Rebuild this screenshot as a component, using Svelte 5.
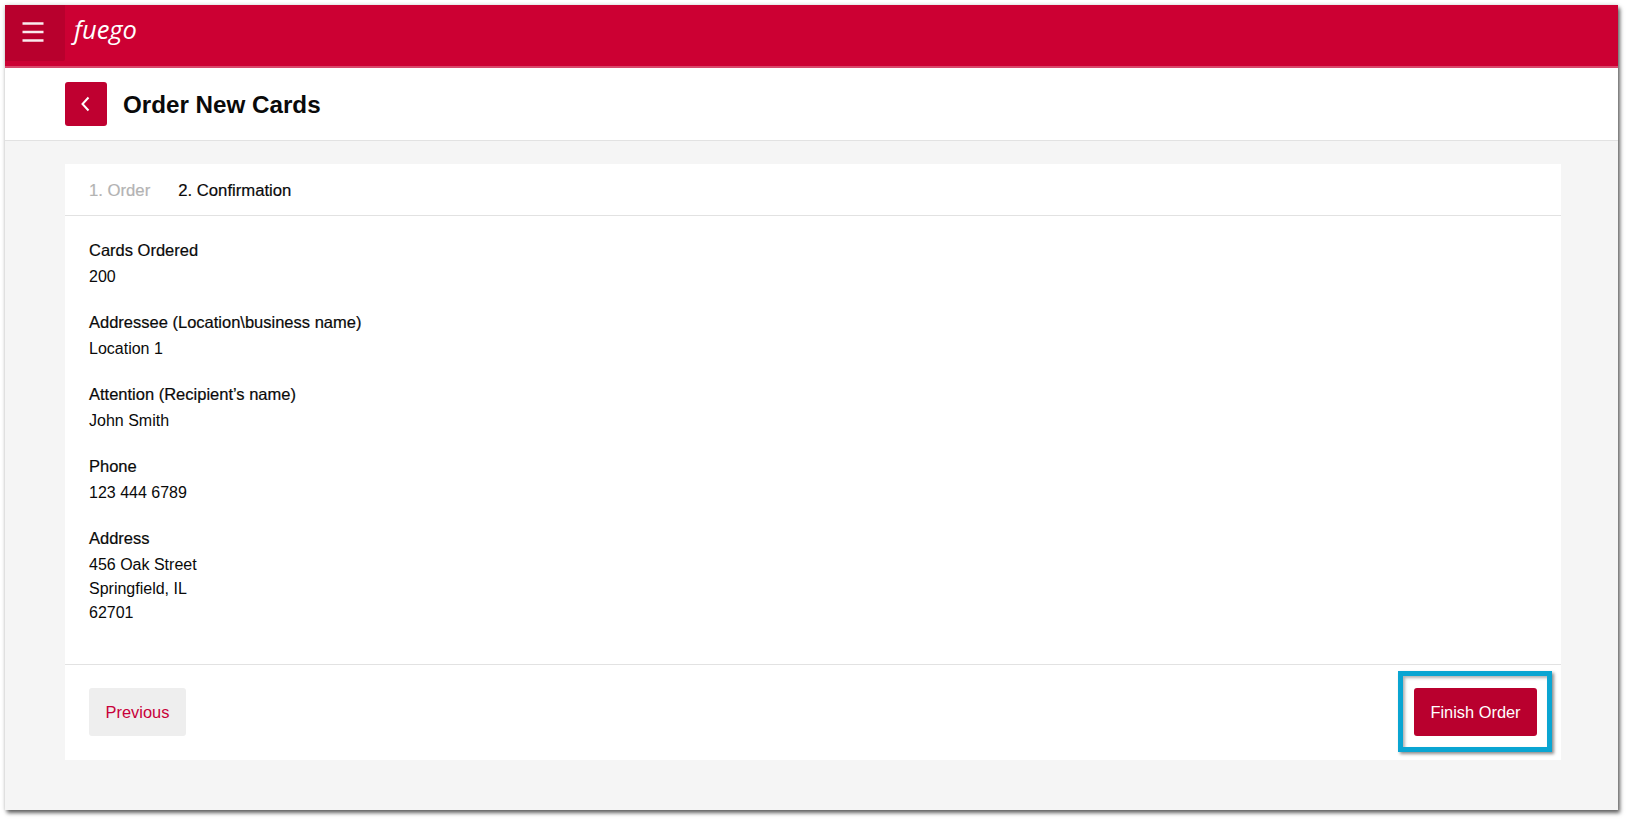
<script>
  const fields = [
    { label: 'Cards Ordered', lines: ['200'] },
    { label: 'Addressee (Location\\business name)', lines: ['Location 1'] },
    { label: 'Attention (Recipient’s name)', lines: ['John Smith'] },
    { label: 'Phone', lines: ['123 444 6789'] },
    { label: 'Address', lines: ['456 Oak Street', 'Springfield, IL', '62701'] }
  ];
</script>

<div class="page">
  <div class="window">
    <header class="topbar">
      <button class="menu" aria-label="Menu">
        <svg width="22" height="20" viewBox="0 0 22 20">
          <path d="M0.500 1.500H21.500M0.500 10H21.500M0.500 18.500H21.500" stroke="#fff" stroke-width="2.300" fill="none" opacity="0.92" />
        </svg>
      </button>
      <span class="logo">fuego</span>
    </header>

    <div class="subhead">
      <button class="back" aria-label="Back">
        <svg width="10" height="16" viewBox="0 0 10 16">
          <path d="M7.500 1.500L1.500 8L7.500 14.500" stroke="#fff" stroke-width="2" fill="none" />
        </svg>
      </button>
      <h1>Order New Cards</h1>
    </div>

    <main class="main">
      <section class="card">
        <nav class="tabs">
          <span class="tab muted">1. Order</span>
          <span class="tab">2. Confirmation</span>
        </nav>

        <div class="content">
          {#each fields as f}
            <div class="field">
              <div class="label">{f.label}</div>
              {#each f.lines as line}
                <div class="value">{line}</div>
              {/each}
            </div>
          {/each}
        </div>

        <footer class="footer">
          <button class="btn secondary">Previous</button>
          <div class="finish-wrap">
            <button class="btn primary">Finish Order</button>
            <div class="highlight"></div>
          </div>
        </footer>
      </section>
    </main>
  </div>
</div>

<style>
  :global(body) {
    margin: 0;
    background: #fff;
    font-family: "Liberation Sans", Arial, sans-serif;
  }
  .page {
    box-sizing: border-box;
    height: 819px;
    padding: 5px 0 0 5px;
    overflow: hidden;
  }
  .window {
    box-sizing: border-box;
    width: 1613px;
    height: 805px;
    display: flex;
    flex-direction: column;
    background: #f5f5f5;
    box-shadow: 2px 3px 4px rgba(0, 0, 0, 0.6), 0 0 4px rgba(0, 0, 0, 0.15);
  }
  .topbar {
    box-sizing: border-box;
    height: 63px;
    flex: none;
    display: flex;
    align-items: flex-start;
    background: #cc0033;
    border-bottom: 2px solid #d9486c;
  }
  .menu {
    box-sizing: border-box;
    width: 60px;
    height: 56px;
    flex: none;
    border: 0;
    padding: 0 4px 3px 0;
    background: #b8002d;
    border-radius: 0 0 2px 0;
    display: flex;
    align-items: center;
    justify-content: center;
  }
  .logo {
    margin: 9px 0 0 9px;
    color: #fff;
    font-family: "Open Sans", sans-serif;
    font-style: italic;
    font-weight: 500;
    font-size: 25.500px;
    line-height: 30px;
  }
  .subhead {
    box-sizing: border-box;
    height: 73px;
    flex: none;
    display: flex;
    align-items: center;
    gap: 16px;
    padding: 0 60px;
    background: #fff;
    border-bottom: 1px solid #e2e2e2;
  }
  .back {
    width: 42px;
    height: 44px;
    border: 0;
    padding: 0;
    border-radius: 3px;
    background: #bf0030;
    display: flex;
    align-items: center;
    justify-content: center;
  }
  h1 {
    margin: 0;
    padding-top: 2px;
    font-size: 24.200px;
    font-weight: 700;
    color: #0a0a0a;
  }
  .main {
    flex: 1;
    min-height: 0;
    display: flex;
    padding: 23px 57px 50px 60px;
  }
  .card {
    flex: 1;
    display: flex;
    flex-direction: column;
    background: #fff;
  }
  .tabs {
    box-sizing: border-box;
    height: 52px;
    flex: none;
    display: flex;
    align-items: center;
    gap: 28px;
    padding: 3px 24px 0;
    border-bottom: 1px solid #e2e2e2;
    font-size: 16.700px;
    -webkit-text-stroke: 0.2px currentColor;
    color: #0a0a0a;
  }
  .tab.muted {
    color: #b3b3b3;
  }
  .content {
    flex: 1;
    display: flex;
    flex-direction: column;
    gap: 21px;
    padding: 22px 24px 0;
    color: #0a0a0a;
    font-size: 16px;
    line-height: 24px;
  }
  .label {
    margin-bottom: 3px;
    font-size: 16.500px;
    -webkit-text-stroke: 0.2px currentColor;
  }
  .footer {
    box-sizing: border-box;
    height: 96px;
    flex: none;
    display: flex;
    align-items: center;
    justify-content: space-between;
    padding: 0 24px 1px;
    border-top: 1px solid #e2e2e2;
  }
  .btn {
    height: 48px;
    border: 0;
    border-radius: 3px;
    padding: 0;
    font-family: inherit;
    font-size: 16.400px;
  }
  .secondary {
    width: 97px;
    background: #eeeeee;
    color: #c8003a;
  }
  .primary {
    width: 123px;
    background: #b9002e;
    color: #fff;
  }
  .finish-wrap {
    position: relative;
    display: flex;
  }
  .highlight {
    position: absolute;
    inset: -17px -15px -16px -16px;
    border: 5px solid #0aa5d2;
    box-shadow: 2px 2px 3px rgba(0, 0, 0, 0.45), inset 2px 2px 3px rgba(0, 0, 0, 0.3);
    pointer-events: none;
  }
</style>
